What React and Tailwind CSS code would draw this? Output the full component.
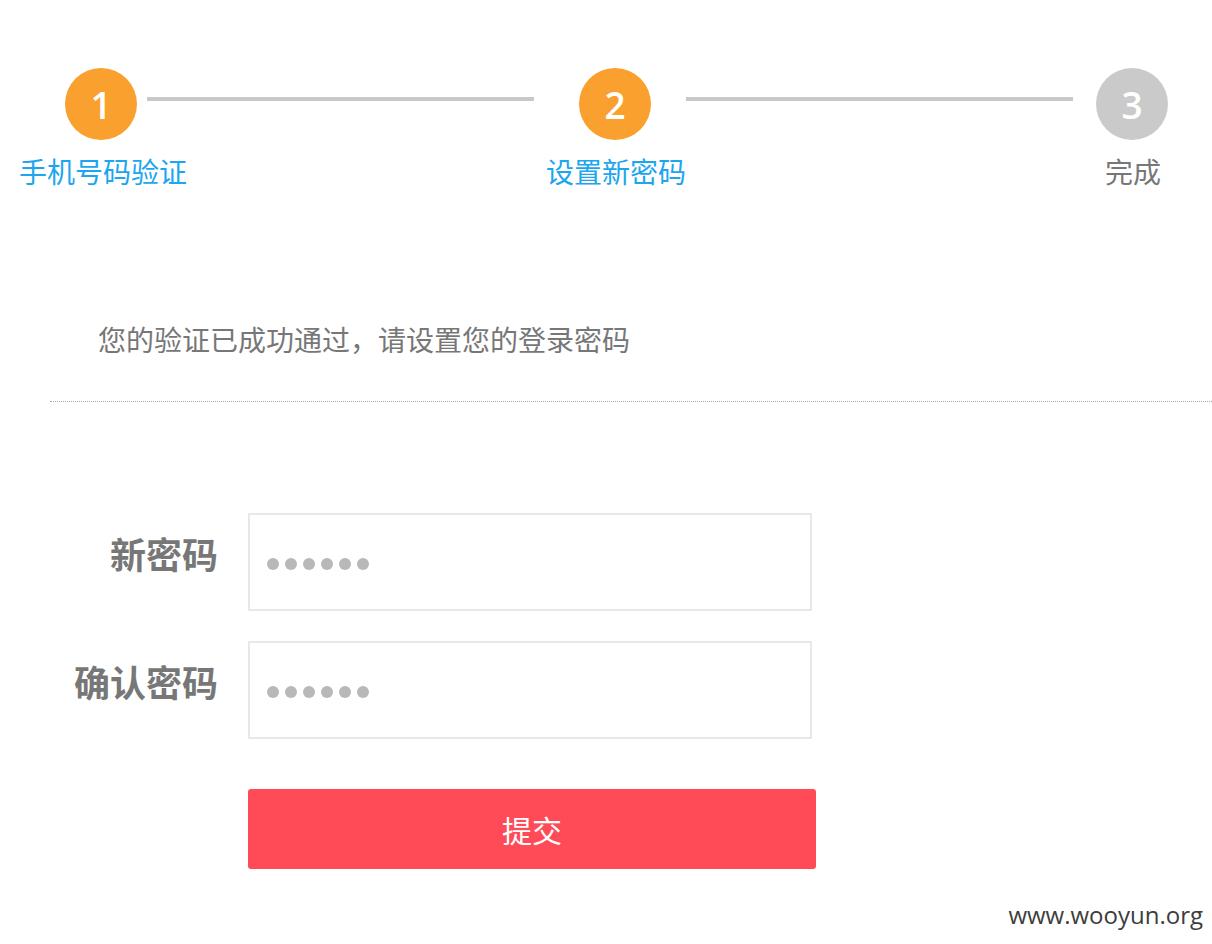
import React from 'react';

const cjk = { fontFamily: '"Noto Sans CJK SC", "Noto Sans", sans-serif' };

const Circle = ({ n, done }) => (
  <div
    className={`w-[72px] h-[72px] rounded-full flex items-center justify-center text-white text-[37px] font-semibold leading-none ${done ? 'bg-[#f9a02e]' : 'bg-[#cacaca]'}`}
    style={{ fontFamily: '"Open Sans", "Noto Sans", sans-serif' }}
  >
    {n}
  </div>
);

const Dots = () => (
  <div className="flex items-center gap-[6px]">
    {[0, 1, 2, 3, 4, 5].map((i) => (
      <span key={i} className="w-3 h-3 rounded-full bg-[#b8b8b8]"></span>
    ))}
  </div>
);

const Field = ({ label }) => (
  <div className="flex items-start">
    <div className="w-[218px] text-right text-[36px] leading-[40px] font-bold text-[#777] mt-[20px]">{label}</div>
    <div className="ml-[30px] w-[564px] h-[98px] border-2 border-[#e8e8e8] bg-white flex items-center pl-[17px] pt-[4px]">
      <Dots />
    </div>
  </div>
);

export default function App() {
  return (
    <div className="relative w-[1212px] h-[944px] bg-white overflow-hidden" style={cjk}>
      {/* steps */}
      <div className="flex items-start pl-[65px] pt-[68px]">
        <Circle n="1" done />
        <div className="ml-[10px] mt-[29px] w-[387px] h-[4px] bg-[#c8c8c8]"></div>
        <div className="ml-[45px]"><Circle n="2" done /></div>
        <div className="ml-[35px] mt-[29px] w-[387px] h-[4px] bg-[#c8c8c8]"></div>
        <div className="ml-[23px]"><Circle n="3" /></div>
      </div>
      <div className="flex mt-[11px] text-[28px] leading-[40px]">
        <div className="shrink-0 ml-[18px] w-[170px] text-center text-[#1ba6ef]">手机号码验证</div>
        <div className="shrink-0 ml-[343px] w-[170px] text-center text-[#1ba6ef]">设置新密码</div>
        <div className="shrink-0 ml-[347px] w-[170px] text-center text-[#777]">完成</div>
      </div>

      {/* notice */}
      <div className="mt-[128px] pl-[98px] text-[28px] leading-[40px] text-[#777]">
        您的验证已成功通过，请设置您的登录密码
      </div>
      <div className="ml-[50px] mt-[42px] border-t border-dotted border-[#aaa]"></div>

      {/* form */}
      <div className="mt-[111px] flex flex-col gap-[30px]">
        <Field label="新密码" />
        <Field label="确认密码" />
      </div>
      <div className="mt-[50px] ml-[248px]">
        <button className="w-[568px] h-[80px] rounded-[3px] bg-[#ff4a57] text-white text-[30px] leading-none">
          提交
        </button>
      </div>

      <div
        className="absolute right-[9px] bottom-[17px] text-[24px] leading-none text-[#3d3d3d]"
        style={{ fontFamily: '"Open Sans", sans-serif' }}
      >
        www.wooyun.org
      </div>
    </div>
  );
}
